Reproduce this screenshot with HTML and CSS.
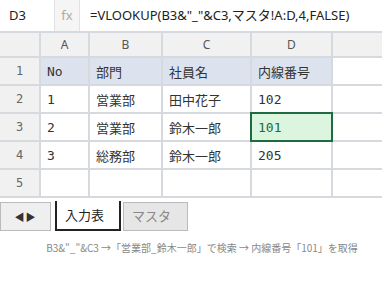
FILE: index.html
```html
<!DOCTYPE html>
<html lang="ja">
<head>
    <meta charset="UTF-8">
    <title>VLOOKUP</title>
    <link rel="stylesheet" href="styles.css">
</head>
<body>
    <div class="formula-bar">
        <div class="name-box">D3</div>
        <div class="fx">fx</div>
        <div class="formula">=VLOOKUP(B3&amp;"_"&amp;C3,マスタ!A:D,4,FALSE)</div>
    </div>
    <div class="sheet">
        <div class="corner"></div>
        <div class="col-head">A</div>
        <div class="col-head">B</div>
        <div class="col-head">C</div>
        <div class="col-head">D</div>
        <div class="col-head"></div>

        <div class="row-head">1</div>
        <div class="cell title">No</div>
        <div class="cell title">部門</div>
        <div class="cell title">社員名</div>
        <div class="cell title">内線番号</div>
        <div class="cell"></div>

        <div class="row-head">2</div>
        <div class="cell">1</div>
        <div class="cell">営業部</div>
        <div class="cell">田中花子</div>
        <div class="cell">102</div>
        <div class="cell"></div>

        <div class="row-head">3</div>
        <div class="cell">2</div>
        <div class="cell">営業部</div>
        <div class="cell">鈴木一郎</div>
        <div class="cell selected">101</div>
        <div class="cell"></div>

        <div class="row-head">4</div>
        <div class="cell">3</div>
        <div class="cell">総務部</div>
        <div class="cell">鈴木一郎</div>
        <div class="cell">205</div>
        <div class="cell"></div>

        <div class="row-head">5</div>
        <div class="cell"></div>
        <div class="cell"></div>
        <div class="cell"></div>
        <div class="cell"></div>
        <div class="cell"></div>
    </div>
    <div class="tabs">
        <div class="tab-nav">◀▶</div>
        <div class="tab active">入力表</div>
        <div class="tab">マスタ</div>
    </div>
    <div class="caption">B3&amp;"_"&amp;C3 →「営業部_鈴木一郎」で検索 → 内線番号「101」を取得</div>
</body>
</html>
```
FILE: styles.css
```css
body {
    margin: 0;
    background: #fff;
    font-family: "Noto Sans", "Noto Sans CJK JP", sans-serif;
    color: #333;
}
.formula-bar {
    display: flex;
    height: 31px;
    border-bottom: 2px solid #d6d9de;
    font-size: 13px;
}
.name-box {
    width: 45px;
    padding-left: 9px;
    line-height: 31px;
    border-right: 1px solid #e2e2e2;
    color: #222;
}
.fx {
    width: 24px;
    text-align: center;
    line-height: 30px;
    background: #f5f5f5;
    border-right: 1px solid #e2e2e2;
    color: #aaa;
    font-size: 13px;
}
.formula {
    padding-left: 10px;
    line-height: 31px;
    color: #222;
    white-space: nowrap;
}
.sheet {
    display: grid;
    grid-template-columns: 39px 47px 71px 87px 79px 1fr;
    grid-auto-rows: 26px;
    grid-template-rows: 23px;
    gap: 2px;
    padding-bottom: 2px;
    background: #d6d9de;
    font-family: "DejaVu Sans Mono", "Noto Sans CJK JP", monospace;
    font-size: 13px;
}
.corner, .col-head, .row-head {
    background: #f1f1f1;
    color: #555;
    display: flex;
    align-items: center;
    justify-content: center;
}
.col-head {
    font-family: "Noto Sans", sans-serif;
    font-size: 12px;
}
.row-head {
    font-size: 12px;
    color: #666;
}
.cell {
    background: #fff;
    display: flex;
    align-items: center;
    padding-left: 6px;
    color: #333;
}
.cell.title {
    background: #dce3ee;
}
.cell.selected {
    background: #dcf5df;
    color: #1f6b3c;
    outline: 2px solid #1d6b3e;
}
.tabs {
    display: flex;
    align-items: flex-start;
    margin-top: 3px;
    font-family: "Noto Sans CJK JP", sans-serif;
    font-size: 13px;
}
.tab-nav {
    width: 49px;
    height: 27px;
    margin-top: 1px;
    border: 1px solid #bbb;
    background: #efefef;
    color: #333;
    font-size: 10px;
    line-height: 27px;
    text-align: center;
    letter-spacing: 1px;
}
.tab {
    height: 27px;
    margin-top: 1px;
    margin-left: 2px;
    width: 55px;
    padding-left: 8px;
    border: 1px solid #bbb;
    background: #e6e6e6;
    color: #888;
    line-height: 26px;
}
.tab.active {
    margin-left: 4px;
    margin-top: 0;
    height: 28px;
    width: 54px;
    padding-left: 8px;
    border: 2px solid #222;
    border-top: none;
    background: #fff;
    color: #222;
    line-height: 27px;
}
.caption {
    margin-top: 9px;
    padding-left: 22px;
    text-align: center;
    font-family: "Noto Sans CJK JP", sans-serif;
    font-size: 10px;
    color: #888;
}
```
